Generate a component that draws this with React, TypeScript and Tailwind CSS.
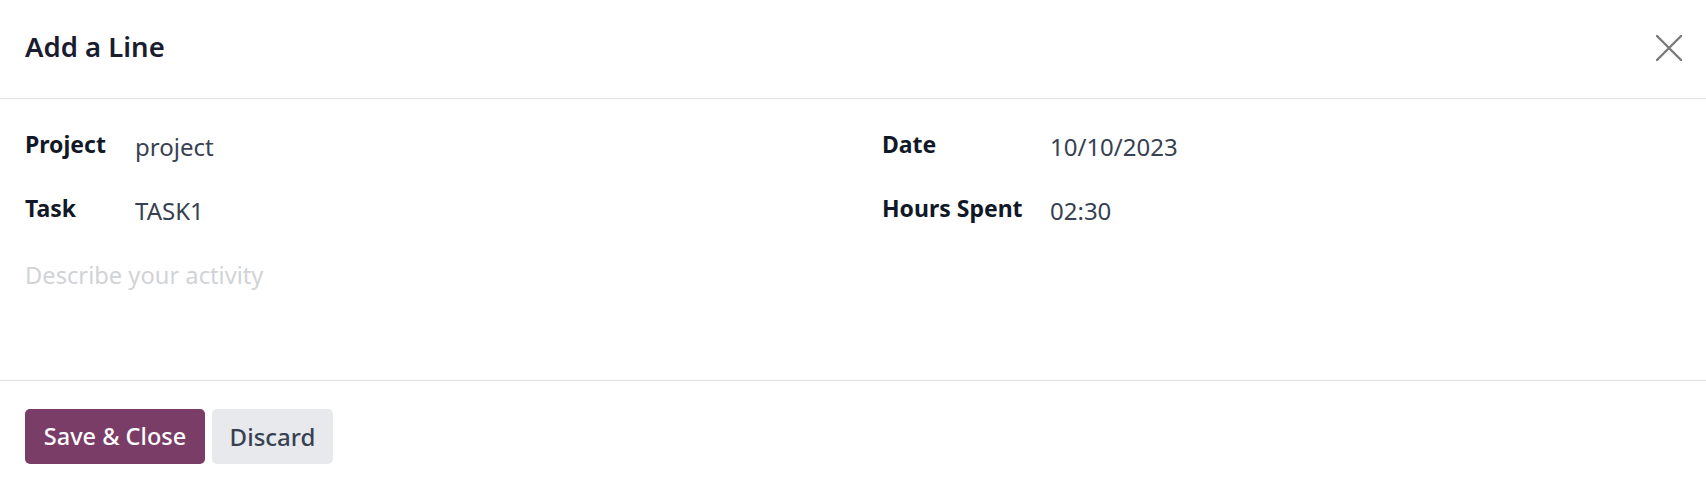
import React from "react";

const font = { fontFamily: '"Noto Sans", "Open Sans", sans-serif' };

function Field({ label, value, labelW }: { label: string; value: string; labelW: string }) {
  return (
    <div className="flex items-center h-[32px]">
      <div className={`${labelW} shrink-0 text-[23px] font-bold text-[#111827] leading-[32px] -mt-[7px]`}>{label}</div>
      <div className="text-[24px] text-[#374151] leading-[32px]">{value}</div>
    </div>
  );
}

export default function App() {
  return (
    <div className="w-[1706px] h-[490px] bg-white flex flex-col" style={font}>
      <div className="h-[99px] shrink-0 border-b border-[#dee2e6] flex items-center justify-between pl-[25px] pr-[24px]">
        <div className="text-[27.5px] font-semibold text-[#1a1d2e] leading-none -mt-[4px]">Add a Line</div>
        <svg width="26" height="26" viewBox="0 0 26 26" className="-mt-[2px]">
          <path d="M1 1 L25 25 M25 1 L1 25" stroke="#7a7a7a" strokeWidth="2.4" strokeLinecap="round" />
        </svg>
      </div>
      <div className="h-[282px] shrink-0 border-b border-[#dee2e6] px-[25px] pt-[32px]">
        <div className="flex">
          <div className="w-[857px] shrink-0 flex flex-col gap-[32px]">
            <Field label="Project" value="project" labelW="w-[110px]" />
            <Field label="Task" value="TASK1" labelW="w-[110px]" />
          </div>
          <div className="flex flex-col gap-[32px]">
            <Field label="Date" value="10/10/2023" labelW="w-[168px]" />
            <Field label="Hours Spent" value="02:30" labelW="w-[168px]" />
          </div>
        </div>
        <div className="mt-[32px] h-[32px] leading-[32px] text-[23.7px] text-[#d1d3d6]">Describe your activity</div>
      </div>
      <div className="flex gap-[7px] px-[25px] pt-[28px]">
        <button className="h-[55px] w-[180px] rounded-[5px] bg-[#793d67] text-white text-[23.5px] font-medium pt-[1px]">Save &amp; Close</button>
        <button className="h-[55px] w-[121px] rounded-[5px] bg-[#e7e9ed] text-[#374151] text-[24px] font-medium pt-[1px]">Discard</button>
      </div>
    </div>
  );
}
